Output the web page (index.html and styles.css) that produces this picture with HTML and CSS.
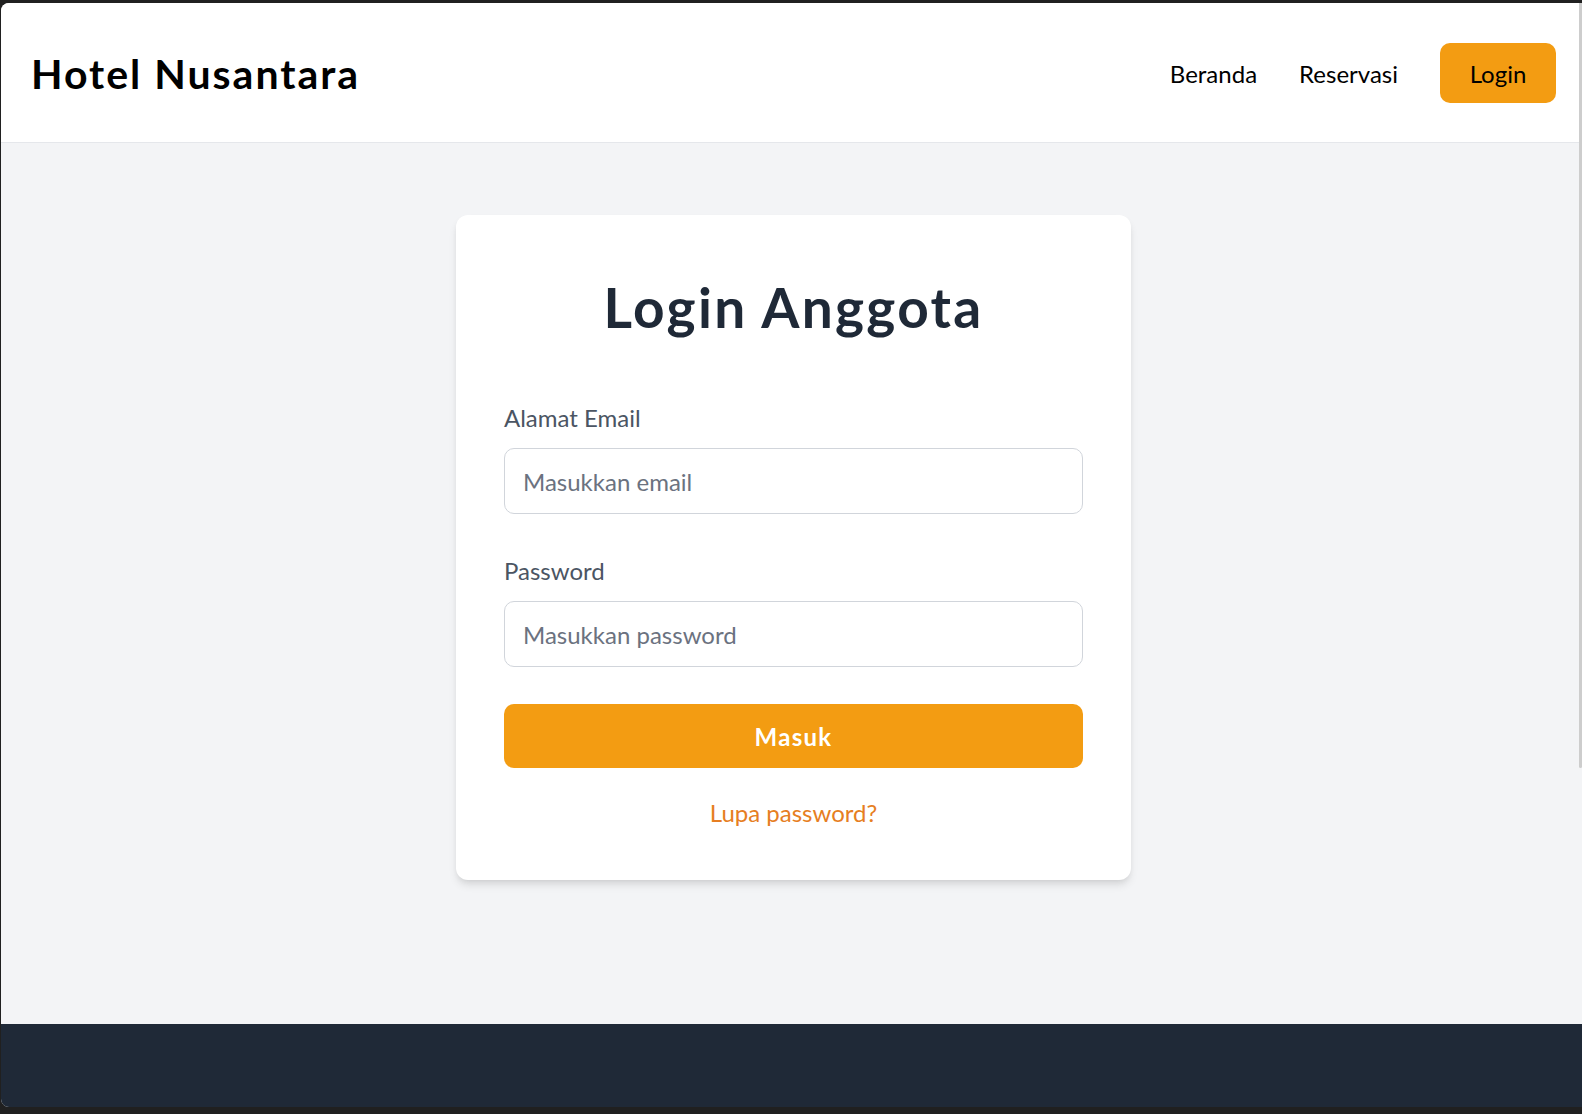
FILE: index.html
```html
<!DOCTYPE html>
<html lang="id">
<head>
<meta charset="utf-8">
<title>Hotel Nusantara - Login</title>
<link rel="stylesheet" href="styles.css">
</head>
<body>
<div class="window">
  <header class="topbar">
    <div class="brand">Hotel Nusantara</div>
    <nav class="nav">
      <a class="nav-link" href="#">Beranda</a>
      <a class="nav-link" href="#">Reservasi</a>
      <a class="nav-btn" href="#">Login</a>
    </nav>
  </header>
  <main class="main">
    <section class="card">
      <h1 class="card-title">Login Anggota</h1>
      <form class="form">
        <label class="label">Alamat Email</label>
        <input class="input" type="email" placeholder="Masukkan email">
        <label class="label label-second">Password</label>
        <input class="input" type="password" placeholder="Masukkan password">
        <button class="submit" type="button">Masuk</button>
        <a class="forgot" href="#">Lupa password?</a>
      </form>
    </section>
  </main>
  <footer class="footer"></footer>
  <div class="scrollbar"></div>
</div>
</body>
</html>
```

FILE: styles.css
```css
* { box-sizing: border-box; }
html, body { margin: 0; padding: 0; }
body {
  background: #202020;
  font-family: Lato, "Noto Sans", sans-serif;
  height: 1114px;
  overflow: hidden;
}
.window {
  position: relative;
  margin: 3px 0 0 1px;
  height: 1104px;
  border-radius: 8px 0 0 8px;
  overflow: hidden;
  display: flex;
  flex-direction: column;
  background: #f3f4f6;
}
.topbar {
  height: 140px;
  flex: none;
  background: #fff;
  border-bottom: 1px solid #e5e7eb;
  display: flex;
  align-items: center;
  justify-content: space-between;
  padding: 0 26px 0 30px;
}
.brand {
  font-size: 41px;
  font-weight: 700;
  letter-spacing: 2px;
  color: #000;
  line-height: 48px;
  padding-top: 3px;
}
.nav {
  display: flex;
  align-items: center;
}
.nav-link {
  font-size: 24px;
  line-height: 36px;
  color: #000;
  text-decoration: none;
  margin-right: 42px;
  padding-top: 2px;
}
.nav-btn {
  display: flex;
  align-items: center;
  justify-content: center;
  width: 116px;
  height: 60px;
  background: #f39c12;
  border-radius: 10px;
  color: #000;
  font-size: 24px;
  text-decoration: none;
  padding-top: 2px;
}
.main {
  flex: 1;
  display: flex;
  justify-content: center;
  align-items: flex-start;
  padding: 72px 0 0 4px;
}
.card {
  width: 675px;
  background: #fff;
  border-radius: 12px;
  padding: 62px 48px 49px;
  box-shadow: 0 6px 9px -1.5px rgba(0,0,0,0.1), 0 3px 6px -3px rgba(0,0,0,0.1);
}
.card-title {
  margin: 0;
  text-align: center;
  font-size: 55px;
  line-height: 60px;
  font-weight: 700;
  letter-spacing: 2.3px;
  color: #1f2937;
}
.form {
  display: flex;
  flex-direction: column;
}
.label {
  margin-top: 63px;
  font-size: 24px;
  line-height: 36px;
  color: #4b5563;
}
.label-second { margin-top: 39px; }
.input {
  margin-top: 12px;
  height: 66px;
  width: 100%;
  border: 1px solid #d1d5db;
  border-radius: 10px;
  padding: 0 18px;
  font-family: inherit;
  font-size: 24px;
  color: #1f2937;
  background: #fff;
  outline: none;
}
.input::placeholder { color: #6b7280; }
.submit {
  margin-top: 37px;
  height: 64px;
  border: none;
  border-radius: 10px;
  background: #f39c12;
  color: #fff;
  font-family: inherit;
  font-size: 24px;
  font-weight: 700;
  letter-spacing: 1.3px;
  cursor: pointer;
}
.forgot {
  margin-top: 27px;
  text-align: center;
  font-size: 24px;
  line-height: 36px;
  color: #e67e22;
  text-decoration: none;
}
.footer {
  height: 83px;
  flex: none;
  background: #1f2937;
}
.scrollbar {
  position: absolute;
  top: 0;
  right: 0;
  width: 3px;
  height: 765px;
  background: #cdcdcd;
  border-radius: 0 0 2px 2px;
}
```
